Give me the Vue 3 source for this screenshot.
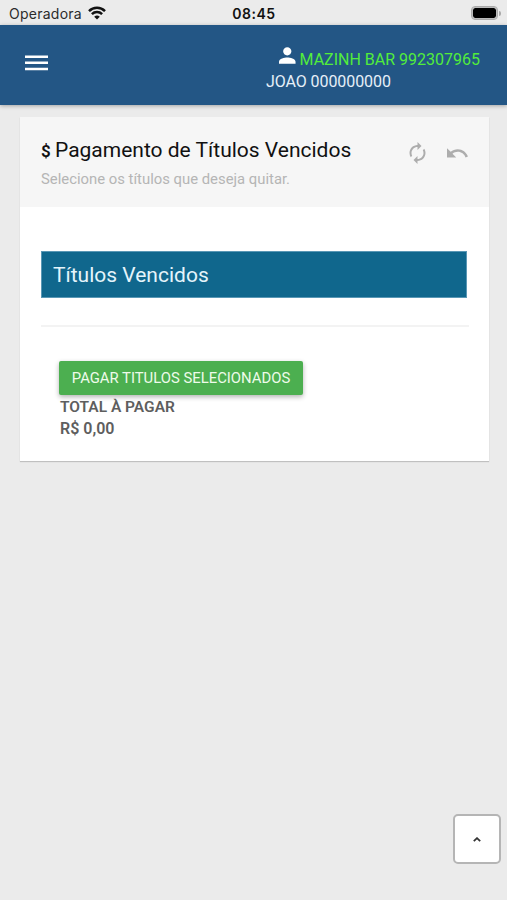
<template>
  <div class="app">
    <div class="status-bar">
      <div class="carrier">
        <span>Operadora</span>
        <svg class="wifi" viewBox="0 0 18 14">
          <path d="M1 5.1a11.4 11.4 0 0 1 16 0" />
          <path d="M3.9 8.1a7.3 7.3 0 0 1 10.2 0" />
          <path class="dot" d="M9 13.6 6.2 10.8a4 4 0 0 1 5.6 0z" />
        </svg>
      </div>
      <span class="clock">08:45</span>
      <div class="battery">
        <div class="battery-body"></div>
        <div class="battery-cap"></div>
      </div>
    </div>

    <header class="top-bar">
      <button class="menu-btn" aria-label="Menu">
        <svg viewBox="0 0 23 16">
          <path d="M0 1.8h23M0 7.8h23M0 14h23" />
        </svg>
      </button>
      <div class="user">
        <div class="user-row">
          <svg class="user-icon" viewBox="4 4 16 16">
            <path d="M12 12c2.2 0 4-1.8 4-4s-1.8-4-4-4-4 1.8-4 4 1.8 4 4 4zm0 2c-2.7 0-8 1.3-8 4v2h16v-2c0-2.7-5.3-4-8-4z" />
          </svg>
          <span class="company">{{ company }}</span>
        </div>
        <div class="seller">{{ seller }}</div>
      </div>
    </header>

    <main class="card">
      <div class="card-header">
        <div class="heading">
          <h2><span class="money">$</span>Pagamento de Títulos Vencidos</h2>
          <small>Selecione os títulos que deseja quitar.</small>
        </div>
        <div class="actions">
          <svg class="refresh" viewBox="4 1 16 22">
            <path d="M12 6v3l4-4-4-4v3c-4.42 0-8 3.58-8 8 0 1.57.46 3.03 1.24 4.26L6.7 14.8A5.87 5.87 0 0 1 6 12c0-3.31 2.69-6 6-6zm6.76 1.74L17.3 9.2c.44.84.7 1.79.7 2.8 0 3.31-2.69 6-6 6v-3l-4 4 4 4v-3c4.42 0 8-3.58 8-8 0-1.57-.46-3.03-1.24-4.26z" />
          </svg>
          <svg class="undo" viewBox="2 7 21.5 9.4">
            <path d="M12.5 8c-2.65 0-5.05.99-6.9 2.6L2 7v9h9l-3.62-3.62c1.39-1.16 3.16-1.88 5.12-1.88 3.54 0 6.55 2.31 7.6 5.5l2.37-.78C21.08 11.03 17.15 8 12.5 8z" />
          </svg>
        </div>
      </div>

      <div class="card-body">
        <div class="section-title">Títulos Vencidos</div>
        <hr />
        <div class="payment">
          <button class="pay-btn">PAGAR TITULOS SELECIONADOS</button>
          <strong class="total-label">TOTAL À PAGAR</strong>
          <strong class="total-value">R$ {{ total }}</strong>
        </div>
      </div>
    </main>

    <button class="to-top" aria-label="Topo" @click="scrollTop">
      <svg viewBox="0 0 8 5"><path d="M.8 4.2 4 1.2l3.2 3" /></svg>
    </button>
  </div>
</template>

<script setup>
import { computed } from 'vue'

const company = 'MAZINH BAR 992307965'
const seller = 'JOAO 000000000'
const titulos = []

// soma dos títulos selecionados
const total = computed(() =>
  titulos.reduce((soma, t) => soma + t.valor, 0).toFixed(2).replace('.', ',')
)

const scrollTop = () => window.scrollTo(0, 0)
</script>

<style>
body {
  margin: 0;
  background: #ebebeb;
}
</style>

<style scoped>
.app {
  height: 900px;
  overflow: hidden;
  background: #ebebeb;
  font-family: Roboto, "Liberation Sans", sans-serif;
}

button {
  padding: 0;
  border: 0;
  background: none;
  font-family: inherit;
}

.status-bar {
  display: grid;
  grid-template-columns: 1fr auto 1fr;
  align-items: center;
  height: 25px;
  padding: 1px 6px 0 9px;
  box-sizing: border-box;
  font-family: Inter, "Liberation Sans", sans-serif;
  font-size: 14px;
  color: #2b2b2b;
}

.carrier {
  display: flex;
  align-items: center;
  gap: 6px;
  letter-spacing: 0.25px;
}

.wifi {
  width: 18px;
  height: 14px;
  fill: none;
  stroke: #111;
  stroke-width: 2.5;
}

.wifi .dot {
  fill: #111;
  stroke: none;
}

.clock {
  margin-right: 2px;
  font-weight: 600;
  letter-spacing: 0.5px;
  color: #111;
}

.battery {
  display: flex;
  align-items: center;
  justify-self: end;
  gap: 1px;
}

.battery-body {
  width: 23px;
  height: 10px;
  border: 1px solid #aaa;
  border-radius: 4px;
  padding: 1px;
  background: #000 content-box;
  box-shadow: inset 0 0 0 1px #bbb;
}

.battery-cap {
  width: 2px;
  height: 5px;
  border-radius: 0 2px 2px 0;
  background: #aaa;
}

.top-bar {
  display: flex;
  justify-content: space-between;
  height: 80px;
  padding: 0 27px 0 25px;
  box-sizing: border-box;
  background: #235685;
  box-shadow: 0 1px 4px rgba(0, 0, 0, 0.3);
}

.menu-btn {
  align-self: flex-start;
  margin-top: 30px;
}

.menu-btn svg {
  display: block;
  width: 23px;
  height: 16px;
  stroke: #fff;
  stroke-width: 2.6;
}

.user {
  width: 214px;
  padding-top: 22px;
  font-size: 16px;
  line-height: 22px;
  color: #e6eff8;
  white-space: nowrap;
}

.user-row {
  display: flex;
  height: 24px;
  padding-left: 13px;
}

.user-icon {
  width: 17px;
  height: 17px;
  margin-right: 4px;
  fill: #fff;
}

.company {
  padding-top: 2px;
  color: #52ed3b;
}

.seller {
  letter-spacing: -0.08px;
}

.card {
  width: 469px;
  height: 344px;
  margin: 12px 0 0 20px;
  background: #fff;
  box-shadow: 0 1px 1px rgba(0, 0, 0, 0.18);
}

.card-header {
  display: flex;
  justify-content: space-between;
  height: 90px;
  padding: 20px 20px 0 21px;
  box-sizing: border-box;
  background: #f6f6f6;
}

.heading h2 {
  margin: 0;
  font-size: 21px;
  font-weight: 400;
  line-height: 26px;
  color: #111;
  white-space: nowrap;
}

.money {
  display: inline-block;
  width: 14px;
  font-size: 17px;
  font-weight: 600;
}

.heading small {
  display: block;
  margin-top: 5px;
  font-size: 14.85px;
  line-height: 20px;
  color: #b5b5b5;
}

.actions {
  display: flex;
  align-items: flex-start;
  fill: #adadad;
}

.refresh {
  width: 17px;
  height: 22px;
  margin: 5px 21px 0 0;
}

.undo {
  width: 22px;
  height: 10px;
  margin-top: 11px;
}

.card-body {
  padding: 44px 20px 0 21px;
}

.section-title {
  width: 426px;
  height: 47px;
  padding-left: 11px;
  border: 1px solid #5997b5;
  box-sizing: border-box;
  background: #10678d;
  font-size: 21px;
  line-height: 46px;
  color: #e4f4fb;
}

hr {
  height: 2px;
  margin: 27px 0 0;
  border: 0;
  background: #f3f3f3;
}

.payment {
  display: flex;
  flex-direction: column;
  align-items: flex-start;
  padding: 34px 0 0 18px;
  font-size: 15.5px;
  line-height: 22px;
  color: #5e5e5e;
}

.payment strong {
  padding-left: 1px;
  font-weight: 600;
}

.payment .total-value {
  font-size: 16px;
}

.pay-btn {
  width: 244px;
  height: 34px;
  margin-bottom: 1px;
  border-radius: 2px;
  background: #4caf50;
  box-shadow: 0 2px 5px rgba(0, 0, 0, 0.3);
  font-size: 14.85px;
  color: #eefbea;
  white-space: nowrap;
}

.to-top {
  position: fixed;
  right: 6px;
  bottom: 36px;
  display: flex;
  align-items: center;
  justify-content: center;
  width: 48px;
  height: 50px;
  border: 2px solid #b5b5b5;
  border-radius: 5px;
  background: #fff;
}

.to-top svg {
  width: 8px;
  height: 5px;
  fill: none;
  stroke: #333;
  stroke-width: 1.8;
}
</style>
